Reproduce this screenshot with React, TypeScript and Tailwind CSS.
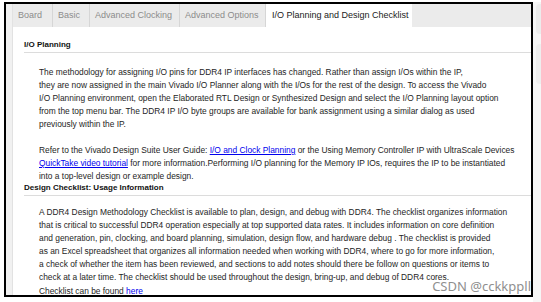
import React from "react";

const tabs = [
  { label: "Board", w: "w-[40px]" },
  { label: "Basic", w: "w-[37px]" },
  { label: "Advanced Clocking", w: "w-[90px]" },
  { label: "Advanced Options", w: "w-[86px]" },
];

const ioLines = [
  "The methodology for assigning I/O pins for DDR4 IP interfaces has changed. Rather than assign I/Os within the IP,",
  "they are now assigned in the main Vivado I/O Planner along with the I/Os for the rest of the design. To access the Vivado",
  "I/O Planning environment, open the Elaborated RTL Design or Synthesized Design and select the I/O Planning layout option",
  "from the top menu bar. The DDR4 IP I/O byte groups are available for bank assignment using a similar dialog as used",
  "previously within the IP.",
];

const checklistLines = [
  "A DDR4 Design Methodology Checklist is available to plan, design, and debug with DDR4. The checklist organizes information",
  "that is critical to successful DDR4 operation especially at top supported data rates. It includes information on core definition",
  "and generation, pin, clocking, and board planning, simulation, design flow, and hardware debug . The checklist is provided",
  "as an Excel spreadsheet that organizes all information needed when working with DDR4, where to go for more information,",
  "a check of whether the item has been reviewed, and sections to add notes should there be follow on questions or items to",
  "check at a later time. The checklist should be used throughout the design, bring-up, and debug of DDR4 cores.",
];

function Link({ children }: { children: React.ReactNode }) {
  return <span className="text-[#0000ee] underline">{children}</span>;
}

function SectionHeading({ title }: { title: string }) {
  return (
    <div className="ml-[11px] border-b border-[#dcdcdc] pb-[1px] text-[8px] font-bold text-[#111] leading-[13px]">
      {title}
    </div>
  );
}

export default function App() {
  return (
    <div className="relative flex h-[302px] w-[541px] overflow-hidden bg-white pt-[2px] font-['Liberation_Sans',Arial,sans-serif] text-[9px] text-[#1e1e1e]">
      <div className="w-[4px] shrink-0" />

      {/* main dialog panel */}
      <div className="flex h-[295px] w-[529px] shrink-0 border-2 border-black">
        <div className="w-[7px] shrink-0 border-r border-[#e2e2e2] bg-[#f1f1f1]" />
        <div className="flex min-w-0 flex-1 flex-col">
          {/* tab bar */}
          <div className="flex h-[23px] shrink-0 bg-[#ebebeb]">
            {tabs.map((t) => (
              <div
                key={t.label}
                className={`${t.w} flex items-center border-r border-[#d6d6d6] pl-[5px] text-[#8c8c8c]`}
              >
                {t.label}
              </div>
            ))}
            <div className="flex w-[146px] items-center bg-white pl-[6px] text-[#222]">
              I/O Planning and Design Checklist
            </div>
          </div>

          {/* page content */}
          <div className="flex-1 overflow-hidden bg-white pt-[11px] leading-[13px] whitespace-nowrap">
            <SectionHeading title="I/O Planning" />
            <div className="ml-[26px] mt-[13px] text-[8.4px]">
              {ioLines.map((l) => (
                <div key={l}>{l}</div>
              ))}
              <div className="mt-[13px]">
                Refer to the Vivado Design Suite User Guide: <Link>I/O and Clock Planning</Link> or the Using Memory
                Controller IP with UltraScale Devices
              </div>
              <div>
                <Link>QuickTake video tutorial</Link> for more information.Performing I/O planning for the Memory IP
                IOs, requires the IP to be instantiated
              </div>
              <div>into a top-level design or example design.</div>
            </div>

            <div className="-mt-[2px]">
              <SectionHeading title="Design Checklist: Usage Information" />
            </div>
            <div className="ml-[26px] mt-[10px] text-[8.4px]">
              {checklistLines.map((l) => (
                <div key={l}>{l}</div>
              ))}
              <div className="mt-[1px]">
                Checklist can be found <Link>here</Link>
              </div>
            </div>
          </div>
        </div>
      </div>

      {/* neighbouring window edge */}
      <div className="flex flex-1 flex-col gap-[10px] bg-[#f6f6f6] pl-[3px] pt-[2px]">
        <div className="h-[30px] rounded-l-[4px] bg-[#ececec]" />
        <div className="h-[40px] rounded-l-[4px] bg-[#eeeeee]" />
      </div>

      <div className="absolute bottom-[8px] right-[10px] font-['Noto_Sans',sans-serif] text-[13px] leading-[15px] text-[#8f8f8f]">
        CSDN @cckkppll
      </div>
    </div>
  );
}
